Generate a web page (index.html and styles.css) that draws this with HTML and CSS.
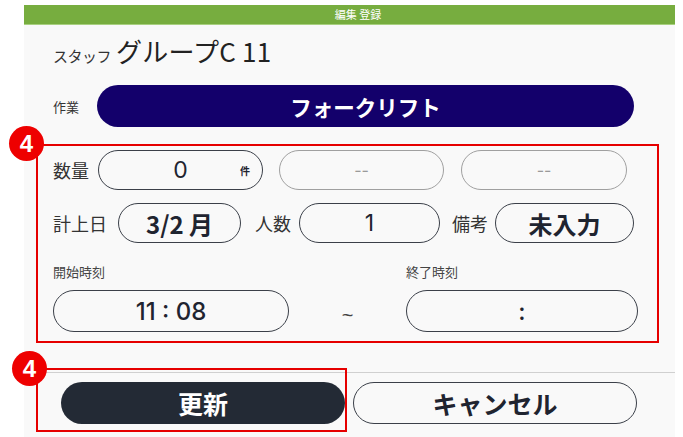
FILE: index.html
```html
<!DOCTYPE html>
<html lang="ja">
<head>
<meta charset="utf-8">
<link rel="stylesheet" href="styles.css">
</head>
<body>
<div class="panel">
  <div class="topbar">編集 登録</div>
  <div class="staff"><span class="staff-label">スタッフ</span><span class="staff-name">グループC 11</span></div>
  <div class="work"><span class="work-label">作業</span><div class="work-btn">フォークリフト</div></div>

  <div class="frame">
    <span class="badge badge-a">4</span>
    <div class="row row1">
      <span class="lbl lbl2">数量</span>
      <div class="pill qty"><span class="val">0</span><span class="unit">件</span></div>
      <div class="pill gray w165">--</div>
      <div class="pill gray w166">--</div>
    </div>
    <div class="row row2">
      <span class="lbl lbl3">計上日</span>
      <div class="pill bold date">3/2 月</div>
      <span class="lbl lbl2 mid">人数</span>
      <div class="pill people">1</div>
      <span class="lbl lbl2 mid2">備考</span>
      <div class="pill bold note">未入力</div>
    </div>
    <div class="times">
      <div class="tcol start">
        <div class="tlabel">開始時刻</div>
        <div class="pill tall tstart">11 : 08</div>
      </div>
      <div class="tilde">~</div>
      <div class="tcol end">
        <div class="tlabel">終了時刻</div>
        <div class="pill tall tend">:</div>
      </div>
    </div>
  </div>

  <div class="footer">
    <div class="frame2"><span class="badge badge-b">4</span></div>
    <button class="btn primary">更新</button>
    <button class="btn ghost">キャンセル</button>
  </div>
</div>
</body>
</html>
```

FILE: styles.css
```css
* { box-sizing: border-box; }
html, body { margin: 0; padding: 0; background: #ffffff; }
body { font-family: "Noto Sans CJK JP", "Noto Sans", sans-serif; color: #222; }

.panel {
  margin: 5px 0 0 24px;
  width: 651px;
  height: 432px;
  background: #f9f9f9;
  position: relative;
}

.topbar {
  height: 20px;
  background: #77ad3f;
  border-bottom: 1px solid #a8d07f;
  color: #fff;
  font-size: 11px;
  line-height: 19px;
  text-align: center;
  padding-left: 17px;
}

.staff {
  display: flex;
  align-items: baseline;
  padding-left: 29px;
  margin-top: 7px;
  height: 31px;
}
.staff-label { font-size: 15px; color: #333; margin-right: 5px; letter-spacing: -0.5px; }
.staff-name { font-size: 26px; font-weight: 400; color: #222; letter-spacing: 0.2px; }

.work {
  display: flex;
  align-items: center;
  margin-top: 22px;
  padding-left: 29px;
}
.work-label { font-size: 13px; color: #333; width: 44px; }
.work-btn {
  width: 537px;
  height: 42px;
  border-radius: 21px;
  background: #13006b;
  color: #fff;
  font-size: 21.5px;
  font-weight: 700;
  display: flex;
  align-items: center;
  justify-content: center;
}

.frame {
  position: relative;
  margin: 17px 0 0 12px;
  width: 623px;
  height: 199px;
  border: 2px solid #e60000;
  padding: 4px 0 0 15px;
}

.badge {
  position: absolute;
  width: 35px;
  height: 35px;
  border-radius: 50%;
  background: #ee0000;
  color: #fff;
  font-family: "Liberation Sans", Arial, sans-serif;
  font-weight: 700;
  font-size: 24px;
  line-height: 35px;
  text-align: center;
}
.badge-a { left: -29px; top: -20px; }
.badge-b { left: -26px; top: -19px; }

.row { display: flex; align-items: center; height: 40px; }
.row2 { margin-top: 13px; }

.lbl { font-size: 18px; color: #333; flex: none; }
.lbl2 { width: 45px; }
.lbl3 { width: 65px; }
.row2 .lbl2.mid { margin-left: 14px; width: 44px; }
.row2 .lbl2.mid2 { margin-left: 12px; width: 43px; }

.pill {
  height: 40px;
  border: 1.5px solid #3b4049;
  border-radius: 20px;
  display: flex;
  align-items: center;
  justify-content: center;
  font-family: "Inter", "Noto Sans CJK JP", sans-serif;
  font-size: 23px;
  color: #1f2430;
  background: #f9f9f9;
  flex: none;
}
.pill.bold { font-weight: 700; font-family: "Noto Sans CJK JP", sans-serif; font-size: 24px; }

.qty { width: 165px; }
.qty .val { flex: 1; text-align: center; padding-left: 22px; }
.qty .unit { font-size: 10px; font-weight: 700; margin-right: 12px; font-family: "Noto Sans CJK JP", sans-serif; }
.gray { border-color: #a0a0a0; color: #9a9a9a; font-size: 16px; }
.w165 { width: 165px; margin-left: 16px; }
.w166 { width: 166px; margin-left: 17px; }

.date { width: 123px; }
.people { width: 141px; }
.note { width: 139px; }

.times { display: flex; align-items: flex-end; margin-top: 19px; }
.tlabel { font-size: 13px; color: #444; height: 28px; line-height: 20px; }
.tall { height: 42px; border-radius: 21px; font-weight: 500; font-size: 24px; }
.tstart { width: 236px; }
.tend { width: 232px; }
.tilde { width: 117px; text-align: center; height: 34px; font-size: 20px; color: #444; line-height: 34px; font-family: "Liberation Sans", sans-serif; }

.footer {
  position: absolute;
  left: 0;
  right: 0;
  top: 367px;
  border-top: 1px solid #d0d0d0;
  padding: 9px 0 0 37px;
  display: flex;
  gap: 8px;
}
.frame2 {
  position: absolute;
  left: 12px;
  top: -5px;
  width: 311px;
  height: 64px;
  border: 2px solid #e60000;
  pointer-events: none;
}
.btn {
  width: 284px;
  height: 42px;
  border-radius: 21px;
  font-family: "Noto Sans CJK JP", sans-serif;
  font-size: 25px;
  font-weight: 700;
  display: flex;
  align-items: center;
  justify-content: center;
  padding: 0;
}
.primary { background: #232a35; color: #fff; border: none; }
.ghost { background: #f9f9f9; color: #1f2430; border: 1.5px solid #3b4049; }
```
